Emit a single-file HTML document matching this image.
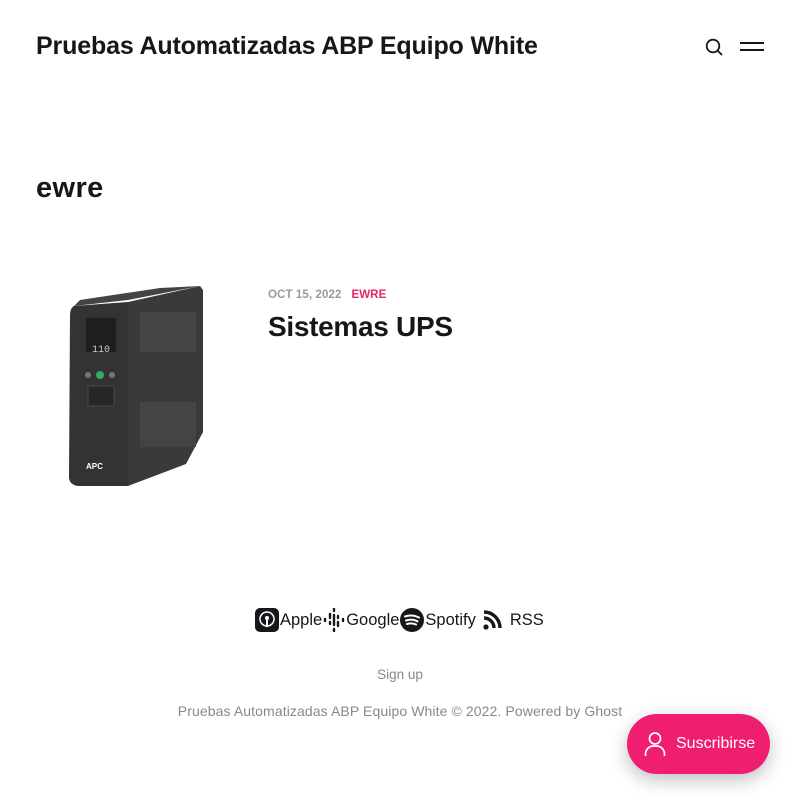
<!DOCTYPE html>
<html><head><meta charset="utf-8"><style>
*{margin:0;padding:0;box-sizing:border-box}
body{width:800px;height:802px;background:#fff;font-family:"Liberation Sans",sans-serif;color:#15171a;position:relative;overflow:hidden}
.abs{position:absolute}
.logo{left:36px;top:32px;font-size:25px;font-weight:bold;letter-spacing:-0.15px;white-space:nowrap}
h1{position:absolute;left:36px;top:172px;font-size:29px;font-weight:bold;letter-spacing:0.4px}
.meta{left:268px;top:289px;font-size:11.5px;font-weight:bold;color:#999;letter-spacing:0.1px}
.meta span{color:#e5266f;margin-left:10px}
.title{left:268px;top:311px;font-size:28px;font-weight:bold;letter-spacing:-0.3px}
.links{left:255px;top:608px;display:flex;align-items:center;font-size:16.5px;color:#15171a;white-space:nowrap;gap:1px}
.signup{left:0;width:800px;text-align:center;top:667px;font-size:13.5px;color:#888}
.copy{left:0;width:800px;text-align:center;top:703px;font-size:14px;color:#888;letter-spacing:0.1px}
.btn{left:627px;top:714px;width:143px;height:60px;border-radius:30px;background:#f01e6f;box-shadow:0 6px 18px rgba(0,0,0,.25);color:#fff;font-size:16px;display:flex;align-items:center;padding-left:17px}
</style></head><body>
<div class="abs logo">Pruebas Automatizadas ABP Equipo White</div>
<svg class="abs" style="left:704px;top:37px" width="20" height="20" viewBox="0 0 20 20"><circle cx="9" cy="9" r="6.3" fill="none" stroke="#15171a" stroke-width="1.8"/><path d="M13.5 13.5L18 18" stroke="#15171a" stroke-width="1.8"/></svg>
<div class="abs" style="left:740px;top:42px;width:24px;height:1.5px;background:#15171a"></div>
<div class="abs" style="left:740px;top:49px;width:24px;height:1.5px;background:#15171a"></div>
<h1>ewre</h1>
<svg class="abs" style="left:60px;top:282px" width="150" height="210" viewBox="0 0 150 210">
<polygon points="68,20 140,4 143,8 143,150 126,182 68,204" fill="#3a3a3a"/>
<polygon points="14,24 68,18 140,4 100,6 20,18" fill="#444"/>
<path d="M14,24 Q10,26 10,34 L9,196 Q10,203 18,204 L68,204 L68,20 Z" fill="#333"/>
<rect x="26" y="36" width="30" height="34" fill="#1f1f1f"/>
<text x="32" y="70" font-size="10" fill="#ccc" font-family="Liberation Mono">110</text>
<circle cx="28" cy="93" r="3" fill="#777"/><circle cx="40" cy="93" r="4" fill="#3a6"/><circle cx="52" cy="93" r="3" fill="#777"/>
<rect x="28" y="104" width="26" height="20" fill="#262626" stroke="#4a4a4a"/>
<text x="26" y="187" font-size="8" font-weight="bold" fill="#fff">APC</text>
<rect x="80" y="30" width="56" height="40" fill="#444"/><rect x="80" y="120" width="56" height="45" fill="#444"/>
</svg>
<div class="abs meta">OCT 15, 2022<span>EWRE</span></div>
<div class="abs title">Sistemas UPS</div>
<div class="abs links">
<svg width="24" height="24" viewBox="0 0 24 24"><rect x="0" y="0" width="24" height="24" rx="5" fill="#15171a"/><circle cx="12" cy="11" r="7" fill="none" stroke="#fff" stroke-width="1.5"/><circle cx="12" cy="10" r="2" fill="#fff"/><rect x="11" y="12" width="2" height="7" fill="#fff"/></svg>
<span>Apple</span>
<svg width="22" height="24" viewBox="0 0 22 24"><g stroke="#15171a" stroke-width="2.4" stroke-linecap="round"><path d="M2 11v2M7 6v4M7 14v2M11 1v2M11 7v10M11 21v2M15 8v2M15 14v4M20 11v2"/></g></svg>
<span>Google</span>
<svg width="24" height="24" viewBox="0 0 24 24"><circle cx="12" cy="12" r="12" fill="#15171a"/><g stroke="#fff" stroke-width="2" fill="none" stroke-linecap="round"><path d="M5 8.5Q12 6 19 9.5M6 12.5Q12 10.5 17.5 13.3M7 16Q12 14.5 16 16.5"/></g></svg>
<span>Spotify</span>
<svg width="26" height="24" viewBox="0 0 26 24" style="margin-left:3px"><circle cx="6" cy="19" r="2.6" fill="#15171a"/><path d="M4 10a10 10 0 0 1 10 10M4 4a16 16 0 0 1 16 16" stroke="#15171a" stroke-width="3.4" fill="none"/></svg>
<span style="margin-left:3px">RSS</span>
</div>
<div class="abs signup">Sign up</div>
<div class="abs copy">Pruebas Automatizadas ABP Equipo White © 2022. Powered by Ghost</div>
<div class="abs btn"><svg width="22" height="26" viewBox="0 0 22 26" style="margin-right:10px"><circle cx="11" cy="7.5" r="5.5" fill="none" stroke="#fff" stroke-width="1.7"/><path d="M1.5 25v-2a8 8 0 0 1 8-8h3a8 8 0 0 1 8 8v2" fill="none" stroke="#fff" stroke-width="1.7"/></svg>Suscribirse</div>
</body></html>
